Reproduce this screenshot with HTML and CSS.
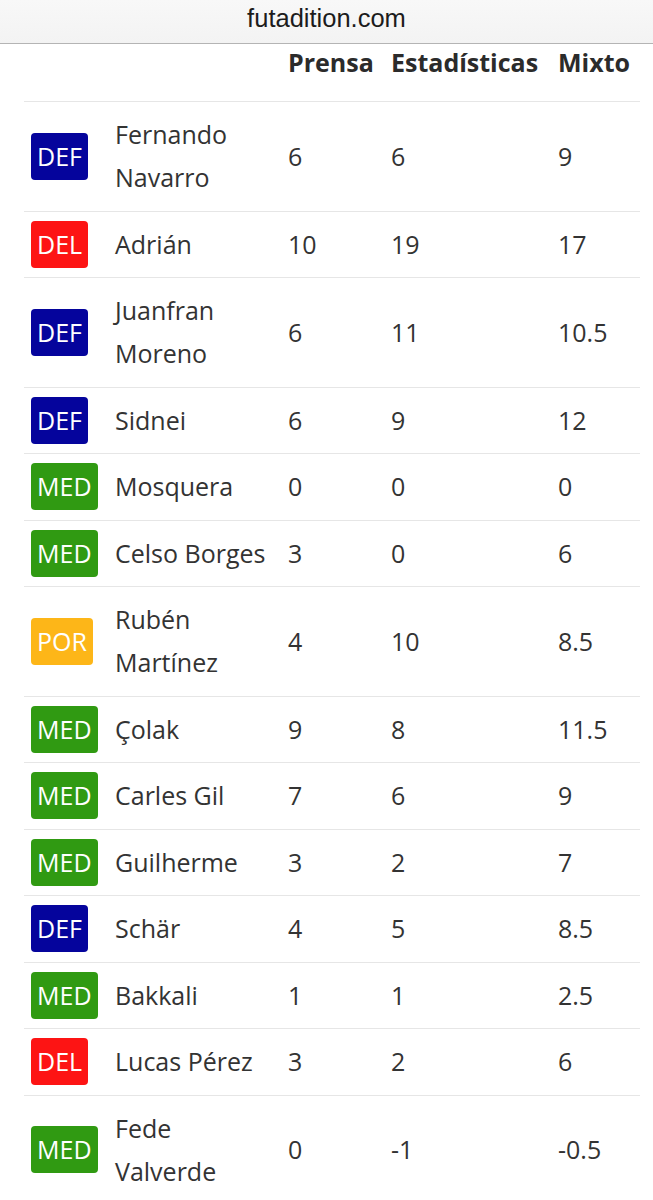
FILE: index.html
```html
<!DOCTYPE html>
<html lang="es">
<head>
    <meta charset="UTF-8">
    <meta name="viewport" content="width=device-width, initial-scale=1.0">
    <title>futadition.com</title>
    <link rel="stylesheet" href="styles.css">
</head>
<body>
    <div class="url-bar">futadition.com</div>

    <table class="notas">
        <colgroup>
            <col class="col-pos">
            <col class="col-name">
            <col class="col-prensa">
            <col class="col-est">
            <col class="col-mixto">
        </colgroup>
        <thead>
            <tr>
                <th></th>
                <th></th>
                <th>Prensa</th>
                <th>Estadísticas</th>
                <th>Mixto</th>
            </tr>
        </thead>
        <tbody>
            <tr><td class="pos"><span class="badge def">DEF</span></td><td class="name">Fernando Navarro</td><td>6</td><td>6</td><td>9</td></tr>
            <tr><td class="pos"><span class="badge del">DEL</span></td><td class="name">Adrián</td><td>10</td><td>19</td><td>17</td></tr>
            <tr><td class="pos"><span class="badge def">DEF</span></td><td class="name">Juanfran Moreno</td><td>6</td><td>11</td><td>10.5</td></tr>
            <tr><td class="pos"><span class="badge def">DEF</span></td><td class="name">Sidnei</td><td>6</td><td>9</td><td>12</td></tr>
            <tr><td class="pos"><span class="badge med">MED</span></td><td class="name">Mosquera</td><td>0</td><td>0</td><td>0</td></tr>
            <tr><td class="pos"><span class="badge med">MED</span></td><td class="name">Celso Borges</td><td>3</td><td>0</td><td>6</td></tr>
            <tr><td class="pos"><span class="badge por">POR</span></td><td class="name">Rubén Martínez</td><td>4</td><td>10</td><td>8.5</td></tr>
            <tr><td class="pos"><span class="badge med">MED</span></td><td class="name">Çolak</td><td>9</td><td>8</td><td>11.5</td></tr>
            <tr><td class="pos"><span class="badge med">MED</span></td><td class="name">Carles Gil</td><td>7</td><td>6</td><td>9</td></tr>
            <tr><td class="pos"><span class="badge med">MED</span></td><td class="name">Guilherme</td><td>3</td><td>2</td><td>7</td></tr>
            <tr><td class="pos"><span class="badge def">DEF</span></td><td class="name">Schär</td><td>4</td><td>5</td><td>8.5</td></tr>
            <tr><td class="pos"><span class="badge med">MED</span></td><td class="name">Bakkali</td><td>1</td><td>1</td><td>2.5</td></tr>
            <tr><td class="pos"><span class="badge del">DEL</span></td><td class="name">Lucas Pérez</td><td>3</td><td>2</td><td>6</td></tr>
            <tr><td class="pos"><span class="badge med">MED</span></td><td class="name">Fede Valverde</td><td>0</td><td>-1</td><td>-0.5</td></tr>
        </tbody>
    </table>
</body>
</html>
```

FILE: styles.css
```css
body {
    margin: 0;
    padding: 0;
    background: #fff;
    font-family: 'Open Sans', 'Noto Sans', sans-serif;
    color: #333;
}
.url-bar {
    height: 43px;
    line-height: 37px;
    text-align: center;
    font-family: 'Liberation Sans', Arial, sans-serif;
    font-size: 25.5px;
    color: #1c1c1c;
    background: linear-gradient(#f8f8f8, #f3f3f3);
    border-bottom: 1px solid #b4b4b4;
}
.notas {
    border-collapse: collapse;
    table-layout: fixed;
    width: 616px;
    margin: 0 0 0 24px;
    font-size: 25px;
}
.col-pos { width: 84px; }
.col-name { width: 173px; }
.col-prensa { width: 103px; }
.col-est { width: 167px; }
.col-mixto { width: 89px; }

.notas th {
    text-align: left;
    font-weight: 700;
    color: #2b2b2b;
    line-height: 30px;
    padding: 3px 0 24px 7px;
    border-bottom: 1px solid #e6e6e6;
    white-space: nowrap;
}
.notas td {
    line-height: 43px;
    padding: 11.25px 0 11.25px 7px;
    border-bottom: 1px solid #e6e6e6;
    vertical-align: middle;
}
.notas td.name {
    padding-right: 6px;
}
.notas td.pos {
    padding: 0 0 0 7px;
}
.badge {
    display: block;
    width: fit-content;
    padding: 0 6px;
    height: 47px;
    line-height: 47px;
    border-radius: 4px;
    color: #fff;
}
.badge.def { background: #05049c; }
.badge.del { background: #fd1414; }
.badge.med { background: #309a12; }
.badge.por { background: #fdb618; }
```
